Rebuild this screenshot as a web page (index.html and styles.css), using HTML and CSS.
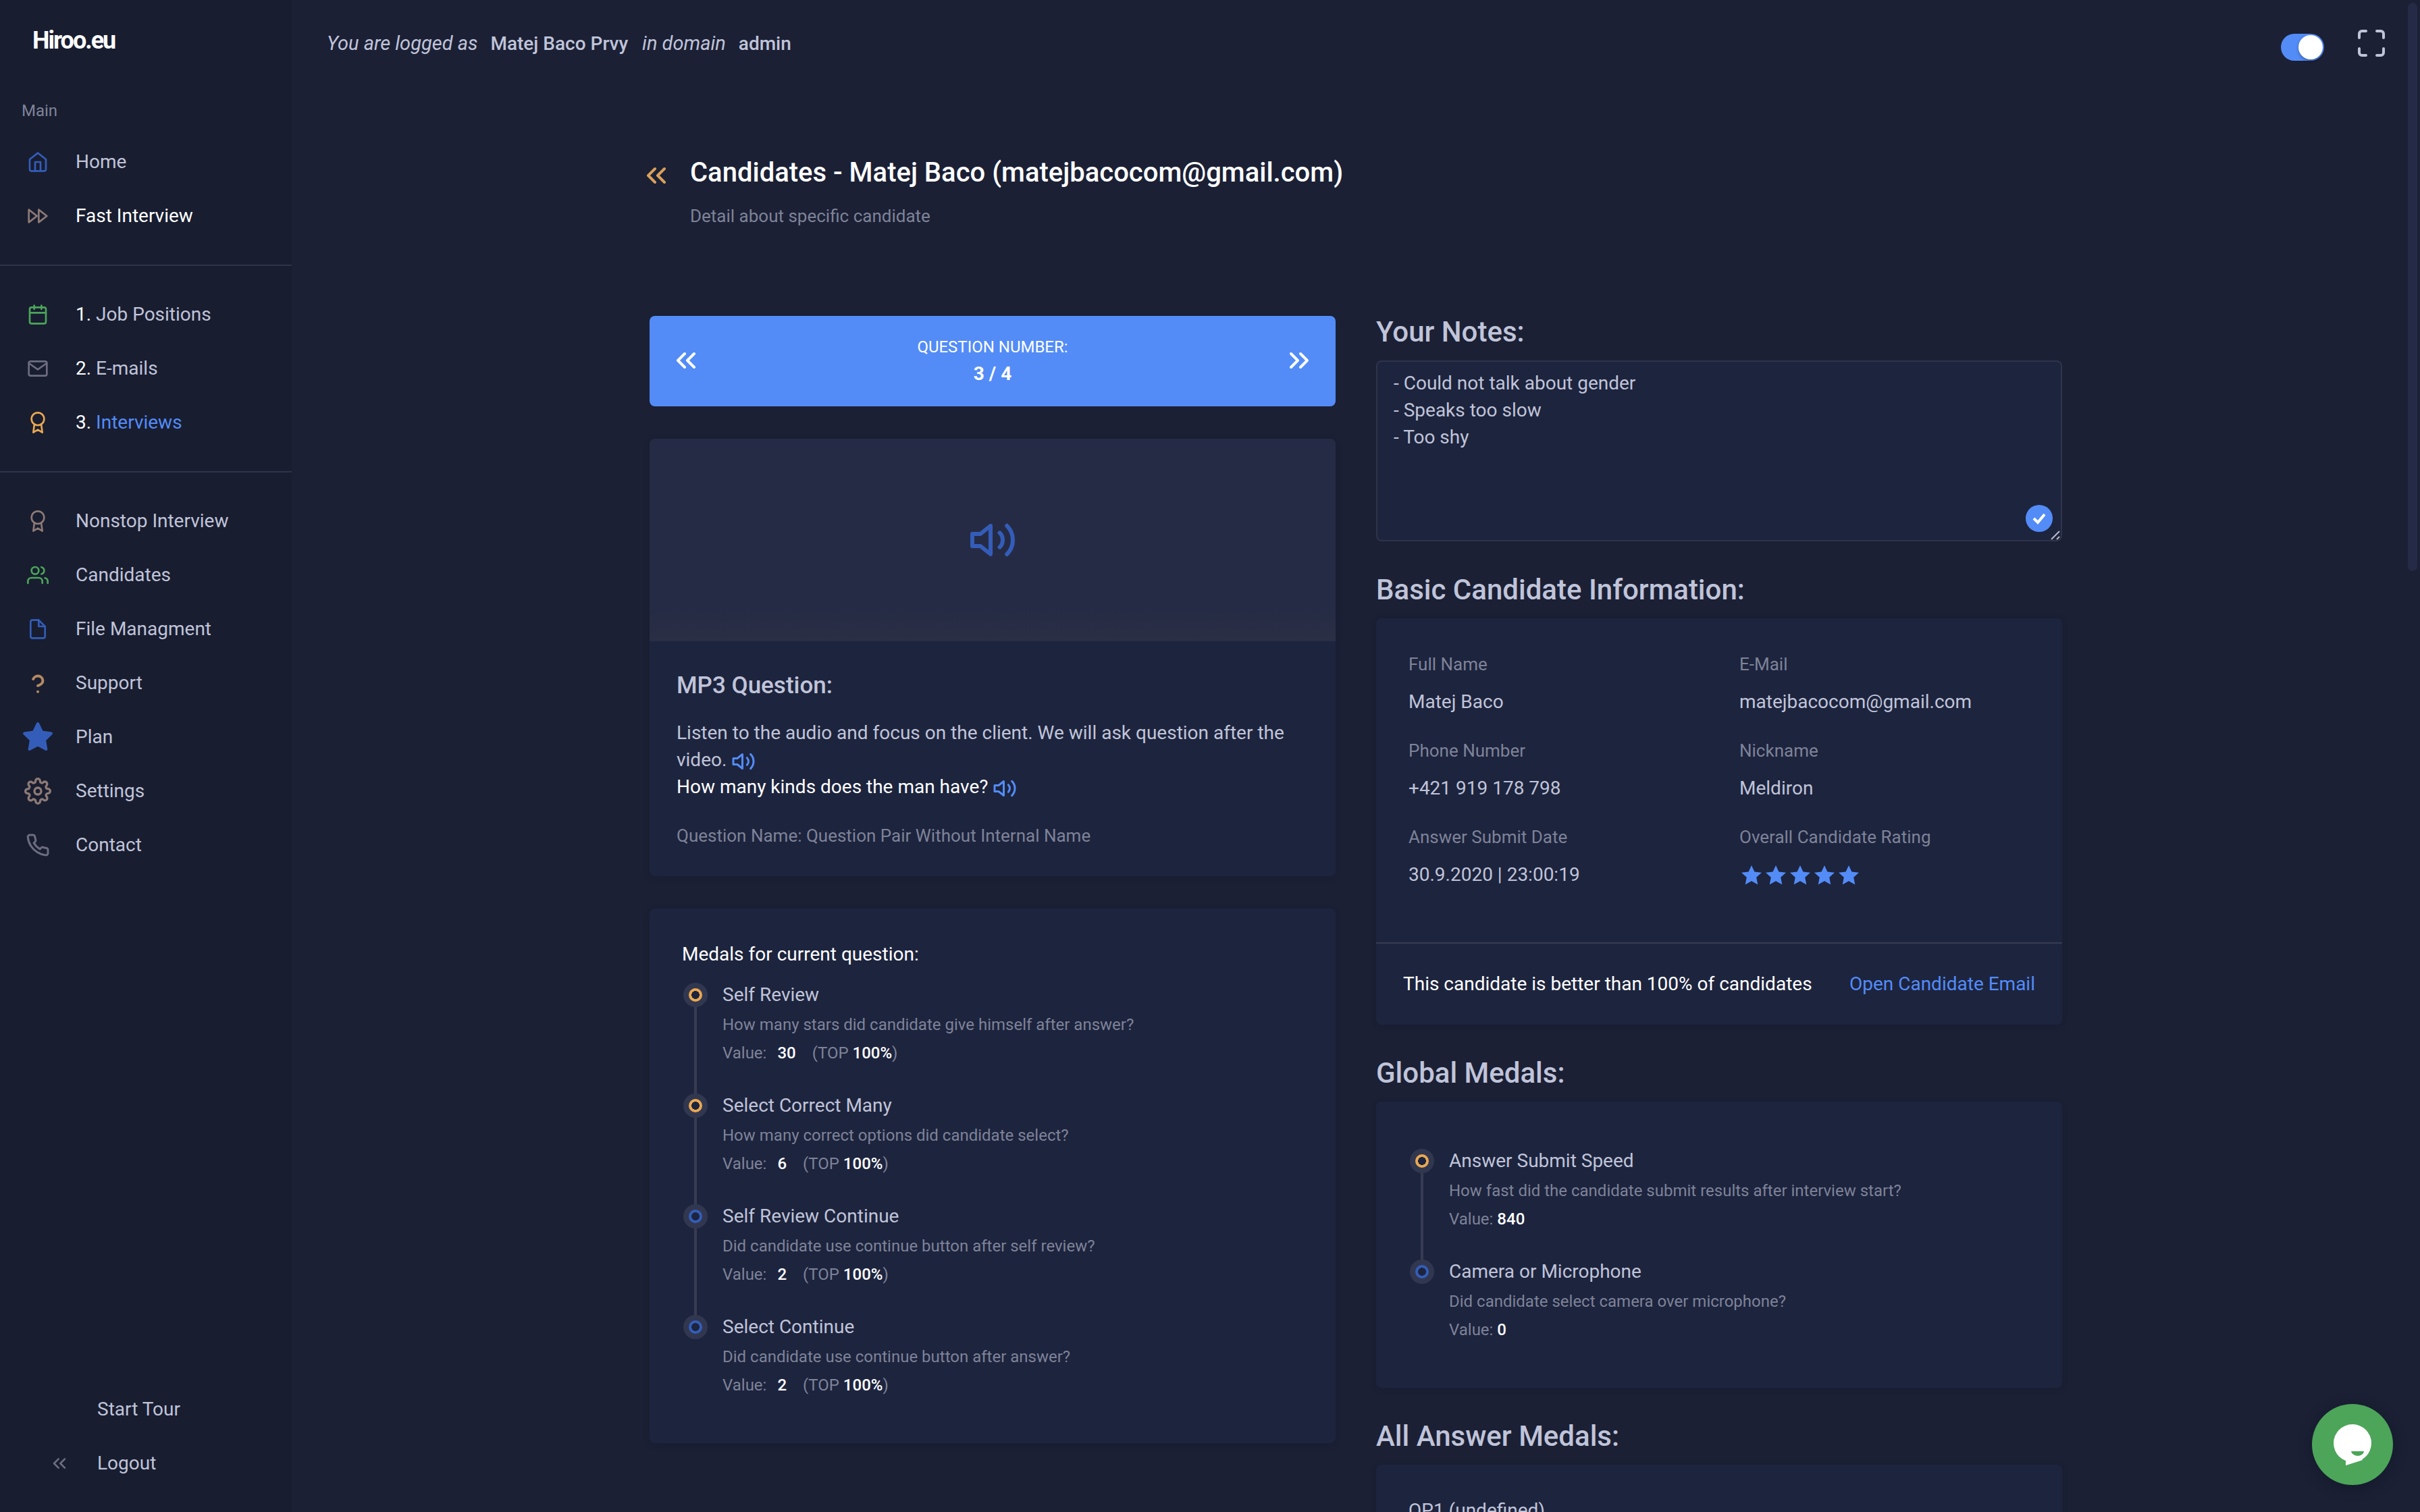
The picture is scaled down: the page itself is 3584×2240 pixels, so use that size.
FILE: index.html
```html
<!DOCTYPE html>
<html lang="en">
<head>
<meta charset="utf-8">
<title>Hiroo.eu - Candidate detail</title>
<meta name="viewport" content="width=device-width, initial-scale=1">
<link rel="stylesheet" href="styles.css">
</head>
<body>
<svg class="sprite" aria-hidden="true">
  <symbol id="home" viewBox="0 0 24 24"><path d="M3 9l9-7 9 7v11a2 2 0 0 1-2 2H5a2 2 0 0 1-2-2z"/><path d="M9 22V12h6v10"/></symbol>
  <symbol id="forward" viewBox="0 0 24 24"><path d="M13 19l9-7-9-7v14z"/><path d="M2 19l9-7-9-7v14z"/></symbol>
  <symbol id="calendar" viewBox="0 0 24 24"><rect x="3" y="4" width="18" height="18" rx="2"/><path d="M16 2v4M8 2v4M3 10h18"/></symbol>
  <symbol id="mail" viewBox="0 0 24 24"><path d="M4 4h16a2 2 0 0 1 2 2v12a2 2 0 0 1-2 2H4a2 2 0 0 1-2-2V6a2 2 0 0 1 2-2z"/><path d="M22 6l-10 7L2 6"/></symbol>
  <symbol id="award" viewBox="0 0 24 24"><circle cx="12" cy="8" r="7"/><path d="M8.21 13.89L7 23l5-3 5 3-1.21-9.12"/></symbol>
  <symbol id="users" viewBox="0 0 24 24"><path d="M17 21v-2a4 4 0 0 0-4-4H5a4 4 0 0 0-4 4v2"/><circle cx="9" cy="7" r="4"/><path d="M23 21v-2a4 4 0 0 0-3-3.87M16 3.13a4 4 0 0 1 0 7.75"/></symbol>
  <symbol id="file" viewBox="0 0 24 24"><path d="M13 2H6a2 2 0 0 0-2 2v16a2 2 0 0 0 2 2h12a2 2 0 0 0 2-2V9z"/><path d="M13 2v7h7"/></symbol>
  <symbol id="question" viewBox="0 0 24 24"><path d="M8.6 9a3.700 3.700 0 0 1 7.100 1.200c0 2.500-3.700 3.700-3.700 3.700M12 18.400h.01"/></symbol>
  <symbol id="star" viewBox="0 0 24 24"><path d="M12 2l3.090 6.260L22 9.270l-5 4.870 1.180 6.880L12 17.770l-6.180 3.250L7 14.140 2 9.270l6.910-1.010L12 2z"/></symbol>
  <symbol id="settings" viewBox="0 0 24 24"><circle cx="12" cy="12" r="3"/><path d="M19.4 15a1.65 1.65 0 0 0 .33 1.82l.06.06a2 2 0 0 1 0 2.83 2 2 0 0 1-2.83 0l-.06-.06a1.65 1.65 0 0 0-1.82-.33 1.65 1.65 0 0 0-1 1.51V21a2 2 0 0 1-2 2 2 2 0 0 1-2-2v-.09A1.65 1.65 0 0 0 9 19.4a1.65 1.65 0 0 0-1.82.33l-.06.06a2 2 0 0 1-2.83 0 2 2 0 0 1 0-2.83l.06-.06a1.65 1.65 0 0 0 .33-1.82 1.65 1.65 0 0 0-1.51-1H3a2 2 0 0 1-2-2 2 2 0 0 1 2-2h.09A1.65 1.65 0 0 0 4.6 9a1.65 1.65 0 0 0-.33-1.82l-.06-.06a2 2 0 0 1 0-2.83 2 2 0 0 1 2.83 0l.06.06a1.65 1.65 0 0 0 1.82.33H9a1.65 1.65 0 0 0 1-1.51V3a2 2 0 0 1 2-2 2 2 0 0 1 2 2v.09a1.65 1.65 0 0 0 1 1.51 1.65 1.65 0 0 0 1.82-.33l.06-.06a2 2 0 0 1 2.83 0 2 2 0 0 1 0 2.83l-.06.06a1.65 1.65 0 0 0-.33 1.82V9a1.65 1.65 0 0 0 1.51 1H21a2 2 0 0 1 2 2 2 2 0 0 1-2 2h-.09a1.65 1.65 0 0 0-1.51 1z"/></symbol>
  <symbol id="phone" viewBox="0 0 24 24"><path d="M22 16.92v3a2 2 0 0 1-2.18 2 19.79 19.79 0 0 1-8.63-3.07 19.5 19.5 0 0 1-6-6 19.79 19.79 0 0 1-3.07-8.67A2 2 0 0 1 4.11 2h3a2 2 0 0 1 2 1.72 12.84 12.84 0 0 0 .7 2.81 2 2 0 0 1-.45 2.11L8.09 9.91a16 16 0 0 0 6 6l1.27-1.27a2 2 0 0 1 2.11-.45 12.84 12.84 0 0 0 2.81.7A2 2 0 0 1 22 16.92z"/></symbol>
  <symbol id="chevrons-left" viewBox="0 0 24 24"><path d="M11 17l-5-5 5-5M18 17l-5-5 5-5"/></symbol>
  <symbol id="chevrons-right" viewBox="0 0 24 24"><path d="M13 17l5-5-5-5M6 17l5-5-5-5"/></symbol>
  <symbol id="volume" viewBox="0 0 24 24"><path d="M11 5L6 9H2v6h4l5 4z"/><path d="M19.07 4.93a10 10 0 0 1 0 14.14M15.54 8.46a5 5 0 0 1 0 7.07"/></symbol>
  <symbol id="maximize" viewBox="0 0 24 24"><path d="M8 3H5a2 2 0 0 0-2 2v3m18 0V5a2 2 0 0 0-2-2h-3m0 18h3a2 2 0 0 0 2-2v-3M3 16v3a2 2 0 0 0 2 2h3"/></symbol>
  <symbol id="rate-star" viewBox="0 0 30 30"><path d="M15 1l4.400 9.600L30 11.800l-7.800 7L24.300 29.500 15 24.200 5.700 29.500l2.100-10.700L0 11.800l10.600-1.200z"/></symbol>
</svg>

<div class="app">
  <aside class="sidebar">
    <a class="brand" href="#">Hiroo.eu</a>
    <p class="nav-label">Main</p>
    <nav>
      <ul class="nav">
        <li><a href="#"><span class="slot blue"><svg class="icon"><use href="#home"/></svg></span>Home</a></li>
        <li><a class="bright" href="#"><span class="slot sand"><svg class="icon"><use href="#forward"/></svg></span>Fast Interview</a></li>
      </ul>
      <hr>
      <ul class="nav">
        <li><a href="#"><span class="slot green"><svg class="icon"><use href="#calendar"/></svg></span><span><span class="bright">1.</span> Job Positions</span></a></li>
        <li><a href="#"><span class="slot grey"><svg class="icon"><use href="#mail"/></svg></span><span><span class="bright">2.</span> E-mails</span></a></li>
        <li><a class="active" href="#"><span class="slot orange"><svg class="icon"><use href="#award"/></svg></span><span><span class="bright">3.</span> Interviews</span></a></li>
      </ul>
      <hr>
      <ul class="nav">
        <li><a href="#"><span class="slot sand"><svg class="icon"><use href="#award"/></svg></span>Nonstop Interview</a></li>
        <li><a href="#"><span class="slot green"><svg class="icon"><use href="#users"/></svg></span>Candidates</a></li>
        <li><a href="#"><span class="slot blue"><svg class="icon"><use href="#file"/></svg></span>File Managment</a></li>
        <li><a href="#"><span class="slot amber"><svg class="icon icon-xl"><use href="#question"/></svg></span>Support</a></li>
        <li><a href="#"><span class="slot blue"><svg class="icon icon-xl filled"><use href="#star"/></svg></span>Plan</a></li>
        <li><a href="#"><span class="slot sand"><svg class="icon icon-lg"><use href="#settings"/></svg></span>Settings</a></li>
        <li><a href="#"><span class="slot grey"><svg class="icon icon-md"><use href="#phone"/></svg></span>Contact</a></li>
      </ul>
    </nav>
    <ul class="nav nav-bottom">
      <li><a href="#"><span class="slot"></span>Start Tour</a></li>
      <li><a href="#"><span class="slot grey"><svg class="icon"><use href="#chevrons-left"/></svg></span>Logout</a></li>
    </ul>
  </aside>

  <main class="main">
    <header class="topbar">
      <p class="login"><em>You are logged as</em> <strong>Matej Baco Prvy</strong> <em>in domain</em> <strong>admin</strong></p>
      <div class="tools">
        <input class="switch" type="checkbox" role="switch" aria-label="Dark mode" checked>
        <button class="plain" type="button" aria-label="Full screen"><svg class="icon icon-xl"><use href="#maximize"/></svg></button>
      </div>
    </header>

    <div class="content">
      <div class="heading">
        <a class="back" href="#" aria-label="Back"><svg class="icon icon-xl"><use href="#chevrons-left"/></svg></a>
        <h1>Candidates - Matej Baco (matejbacocom@gmail.com)</h1>
        <p>Detail about specific candidate</p>
      </div>

      <div class="columns">
        <div class="column">
          <div class="pager">
            <button class="plain" type="button" aria-label="Previous question"><svg class="icon icon-xl"><use href="#chevrons-left"/></svg></button>
            <p><span class="pager-label">QUESTION NUMBER:</span><strong>3 / 4</strong></p>
            <button class="plain" type="button" aria-label="Next question"><svg class="icon icon-xl"><use href="#chevrons-right"/></svg></button>
          </div>

          <article class="card">
            <div class="media"><svg class="icon icon-media"><use href="#volume"/></svg></div>
            <div class="question">
              <h3>MP3 Question:</h3>
              <p>Listen to the audio and focus on the client. We will ask question after the video. <svg class="icon icon-md sound"><use href="#volume"/></svg><br><span class="bright">How many kinds does the man have?</span> <svg class="icon icon-md sound"><use href="#volume"/></svg></p>
              <p class="note">Question Name: Question Pair Without Internal Name</p>
            </div>
          </article>

          <section class="card medals">
            <h4>Medals for current question:</h4>
            <ul class="timeline">
              <li><span class="dot gold"></span><div><h5>Self Review</h5><p>How many stars did candidate give himself after answer?</p><p class="score"><span>Value:</span><b>30</b><span>(TOP <b>100%</b>)</span></p></div></li>
              <li><span class="dot gold"></span><div><h5>Select Correct Many</h5><p>How many correct options did candidate select?</p><p class="score"><span>Value:</span><b>6</b><span>(TOP <b>100%</b>)</span></p></div></li>
              <li><span class="dot"></span><div><h5>Self Review Continue</h5><p>Did candidate use continue button after self review?</p><p class="score"><span>Value:</span><b>2</b><span>(TOP <b>100%</b>)</span></p></div></li>
              <li><span class="dot"></span><div><h5>Select Continue</h5><p>Did candidate use continue button after answer?</p><p class="score"><span>Value:</span><b>2</b><span>(TOP <b>100%</b>)</span></p></div></li>
            </ul>
          </section>
        </div>

        <div class="column">
          <section>
            <h2><label for="notes">Your Notes:</label></h2>
            <div class="notes">
              <textarea id="notes" rows="6" spellcheck="false">- Could not talk about gender
- Speaks too slow
- Too shy</textarea>
              <svg class="saved" viewBox="0 0 40 40" aria-hidden="true"><circle cx="20" cy="20" r="20"/><path d="M12 20l6 6 10-12"/></svg>
              <svg class="grip" viewBox="0 0 16 16" aria-hidden="true"><path d="M2 15L14 3M10 15l4-4"/></svg>
            </div>
          </section>

          <section>
            <h2>Basic Candidate Information:</h2>
            <div class="card">
              <dl class="facts">
                <div><dt>Full Name</dt><dd>Matej Baco</dd></div>
                <div><dt>E-Mail</dt><dd>matejbacocom@gmail.com</dd></div>
                <div><dt>Phone Number</dt><dd>+421 919 178 798</dd></div>
                <div><dt>Nickname</dt><dd>Meldiron</dd></div>
                <div><dt>Answer Submit Date</dt><dd>30.9.2020 | 23:00:19</dd></div>
                <div><dt>Overall Candidate Rating</dt><dd class="rating" role="img" aria-label="5 of 5 stars"><svg><use href="#rate-star"/></svg><svg><use href="#rate-star"/></svg><svg><use href="#rate-star"/></svg><svg><use href="#rate-star"/></svg><svg><use href="#rate-star"/></svg></dd></div>
              </dl>
              <div class="card-footer">
                <span class="bright">This candidate is better than 100% of candidates</span>
                <a href="#">Open Candidate Email</a>
              </div>
            </div>
          </section>

          <section>
            <h2>Global Medals:</h2>
            <div class="card medals">
              <ul class="timeline">
                <li><span class="dot gold"></span><div><h5>Answer Submit Speed</h5><p>How fast did the candidate submit results after interview start?</p><p>Value: <b>840</b></p></div></li>
                <li><span class="dot"></span><div><h5>Camera or Microphone</h5><p>Did candidate select camera over microphone?</p><p>Value: <b>0</b></p></div></li>
              </ul>
            </div>
          </section>

          <section>
            <h2>All Answer Medals:</h2>
            <div class="card medals">
              <h5>QP1 (undefined)</h5>
            </div>
          </section>
        </div>
      </div>
    </div>
  </main>
</div>

<div class="scroll-thumb"></div>
<button class="chat" type="button" aria-label="Open chat">
  <svg viewBox="0 0 120 120" aria-hidden="true"><g class="bubble"><circle cx="60" cy="58" r="28"/><path d="M50 82v9l25-8-12-13z"/></g><path class="smile" d="M58 70h19c-1 9-17 9-19 0z"/></svg>
</button>
</body>
</html>
```
FILE: styles.css
```css
:root {
  --page: #1b2035;
  --side: #181d30;
  --card: #1d243e;
  --line: #2f344b;
  --text: #c0c4d9;
  --muted: #7e8398;
  --blue: #538cf7;
  --deep-blue: #335db8;
  --orange: #e9a852;
  --green: #4ca559;
}

* { box-sizing: border-box; }

body {
  margin: 0;
  background: var(--page);
  color: var(--text);
  font: 28px/40px Roboto, "Liberation Sans", sans-serif;
  overflow: hidden;
}

h1, h2, h3, h4, h5, p, ul, dl, dd { margin: 0; }
ul { padding: 0; list-style: none; }
a { color: var(--blue); text-decoration: none; }
b { font-weight: 500; color: #fff; }
.bright { color: #fff; }

.sprite { position: absolute; width: 0; height: 0; }

.icon {
  width: 32px;
  height: 32px;
  flex: none;
  fill: none;
  stroke: currentColor;
  stroke-width: 2;
  stroke-linecap: round;
  stroke-linejoin: round;
}
.icon-md { width: 36px; height: 36px; }
.icon-lg { width: 40px; height: 40px; }
.icon-xl { width: 48px; height: 48px; }
.icon-media { width: 72px; height: 72px; }
.filled { fill: currentColor; }

.plain {
  display: flex;
  padding: 0;
  border: 0;
  background: none;
  color: inherit;
  cursor: pointer;
}

/* Layout */
.app {
  display: grid;
  grid-template-columns: 432px minmax(0, 1fr);
  height: 100vh;
}
.sidebar {
  display: flex;
  flex-direction: column;
  height: 100vh;
  background: var(--side);
}
.main { overflow: hidden; }

/* Sidebar */
.brand {
  padding: 0 48px;
  color: #fff;
  font-size: 36px;
  font-weight: 700;
  line-height: 120px;
  letter-spacing: -2px;
}
.nav-label {
  padding: 24px 32px 16px;
  font-size: 24px;
  color: var(--muted);
}
.nav a {
  display: flex;
  align-items: center;
  gap: 36px;
  height: 80px;
  padding-left: 36px;
  color: var(--text);
}
.nav a.bright { color: #fff; }
.nav a.active { color: var(--blue); }
.sidebar hr {
  height: 2px;
  margin: 32px 0;
  border: 0;
  background: var(--line);
}
.slot {
  display: flex;
  align-items: center;
  justify-content: center;
  flex: none;
  width: 40px;
}
.slot.blue { color: var(--deep-blue); }
.slot.sand { color: #8d7a76; }
.slot.green { color: var(--green); }
.slot.grey { color: #6d6c80; }
.slot.orange { color: var(--orange); }
.slot.amber { color: #b38a62; }
.nav-bottom {
  margin-top: auto;
  padding: 0 0 32px 32px;
}

/* Top bar */
.topbar {
  display: flex;
  align-items: center;
  justify-content: space-between;
  min-height: 128px;
  padding: 0 48px 0 52px;
}
.login em { font-size: 29px; font-style: italic; }
.login strong { margin: 0 14px 0 12px; font-weight: 500; }
.tools {
  display: flex;
  align-items: center;
  gap: 46px;
}
.switch {
  appearance: none;
  display: flex;
  justify-content: flex-end;
  width: 64px;
  height: 40px;
  margin: 12px 0 0;
  padding: 2px;
  border-radius: 20px;
  background: var(--blue);
}
.switch::before {
  content: "";
  width: 36px;
  height: 36px;
  border-radius: 50%;
  background: #fff;
  box-shadow: 0 2px 4px rgba(0, 0, 0, .3);
}

/* Page heading */
.content {
  max-width: 2092px;
  margin: 0 auto;
  padding-top: 100px;
}
.heading {
  display: grid;
  grid-template-columns: 48px 1fr;
  gap: 16px 26px;
  align-items: end;
  margin: 0 0 128px -14px;
}
.back { display: flex; color: #d9a05a; }
h1 {
  font-size: 40px;
  font-weight: 500;
  line-height: 56px;
  color: #fff;
}
.heading p {
  grid-column: 2;
  font-size: 26px;
  color: var(--muted);
}

.columns {
  display: grid;
  grid-template-columns: 1fr 1fr;
  gap: 60px;
  align-items: start;
}
.column {
  display: flex;
  flex-direction: column;
  gap: 48px;
}
.card {
  border-radius: 8px;
  background: var(--card);
  box-shadow: 0 2px 8px rgba(20, 24, 44, .3);
  overflow: hidden;
}
h2 {
  margin-bottom: 18px;
  font-size: 42px;
  font-weight: 500;
  line-height: 48px;
}

/* Question pager */
.pager {
  display: flex;
  align-items: center;
  justify-content: space-between;
  padding: 26px 30px 28px;
  border-radius: 8px;
  background: var(--blue);
  color: #fff;
  text-align: center;
}
.pager p { display: grid; }
.pager-label { font-size: 24px; }

/* Audio question */
.media {
  display: flex;
  align-items: center;
  justify-content: center;
  height: 300px;
  background: linear-gradient(#262b45 84%, #2a2f45);
  color: var(--deep-blue);
}
.question { padding: 40px; }
h3 {
  margin-bottom: 24px;
  font-size: 35px;
  font-weight: 500;
  line-height: 52px;
}
.sound { vertical-align: middle; color: var(--blue); }
.note {
  margin-top: 32px;
  font-size: 26px;
  color: var(--muted);
}

/* Medals */
.medals { padding: 48px; }
h4, h5 { font-size: 28px; font-weight: 400; }
h4 { color: #fff; }
.timeline { padding: 20px 0; }
.timeline li {
  position: relative;
  display: flex;
  gap: 22px;
  padding: 0 0 40px 2px;
}
.timeline li:last-child { padding-bottom: 0; }
.timeline li:not(:last-child)::before {
  content: "";
  position: absolute;
  top: 20px;
  left: 18px;
  width: 4px;
  height: 100%;
  background: #373c54;
}
.dot {
  z-index: 1;
  flex: none;
  width: 36px;
  height: 36px;
  margin-top: 2px;
  border: 8px solid #323750;
  border-radius: 50%;
  background: radial-gradient(circle, var(--card) 6px, var(--deep-blue) 6px);
}
.dot.gold { background: radial-gradient(circle, var(--card) 6px, var(--orange) 6px); }
.timeline p {
  margin-top: 6px;
  font-size: 24px;
  line-height: 36px;
  color: var(--muted);
}
.score { display: flex; }
.score > b { margin: 0 24px 0 16px; }

/* Notes */
.notes { position: relative; }
textarea {
  display: block;
  width: 100%;
  padding: 12px 24px;
  border: 2px solid var(--line);
  border-radius: 8px;
  background: var(--card);
  color: var(--text);
  font: inherit;
  resize: none;
}
.saved {
  position: absolute;
  right: 14px;
  bottom: 14px;
  width: 40px;
  height: 40px;
  fill: var(--blue);
}
.saved path { fill: none; stroke: #fff; stroke-width: 4; }
.grip {
  position: absolute;
  right: 2px;
  bottom: 2px;
  width: 16px;
  height: 16px;
  stroke: #b8bcc8;
  stroke-width: 2;
}

/* Candidate facts */
.facts {
  display: grid;
  grid-template-columns: 1fr 1fr;
  gap: 32px 60px;
  padding: 48px 48px 80px;
}
dt { font-size: 26px; color: var(--muted); }
dd { margin-top: 16px; }
.rating {
  display: flex;
  align-items: center;
  gap: 6px;
  height: 40px;
  padding-left: 3px;
}
.rating svg { width: 30px; height: 30px; fill: var(--blue); }
.card-footer {
  display: flex;
  justify-content: space-between;
  gap: 32px;
  padding: 40px;
  border-top: 2px solid #373c54;
}

/* Floating parts */
.scroll-thumb {
  position: fixed;
  top: 4px;
  right: 4px;
  width: 14px;
  height: 842px;
  border-radius: 7px;
  background: #252b47;
}
.chat {
  position: fixed;
  right: 40px;
  bottom: 40px;
  width: 120px;
  height: 120px;
  padding: 0;
  border: 0;
  border-radius: 50%;
  background: var(--green);
  box-shadow: 0 4px 20px rgba(10, 14, 30, .4);
  cursor: pointer;
}
.chat svg { display: block; }
.bubble { fill: #fff; }
.smile { fill: var(--green); }
```
